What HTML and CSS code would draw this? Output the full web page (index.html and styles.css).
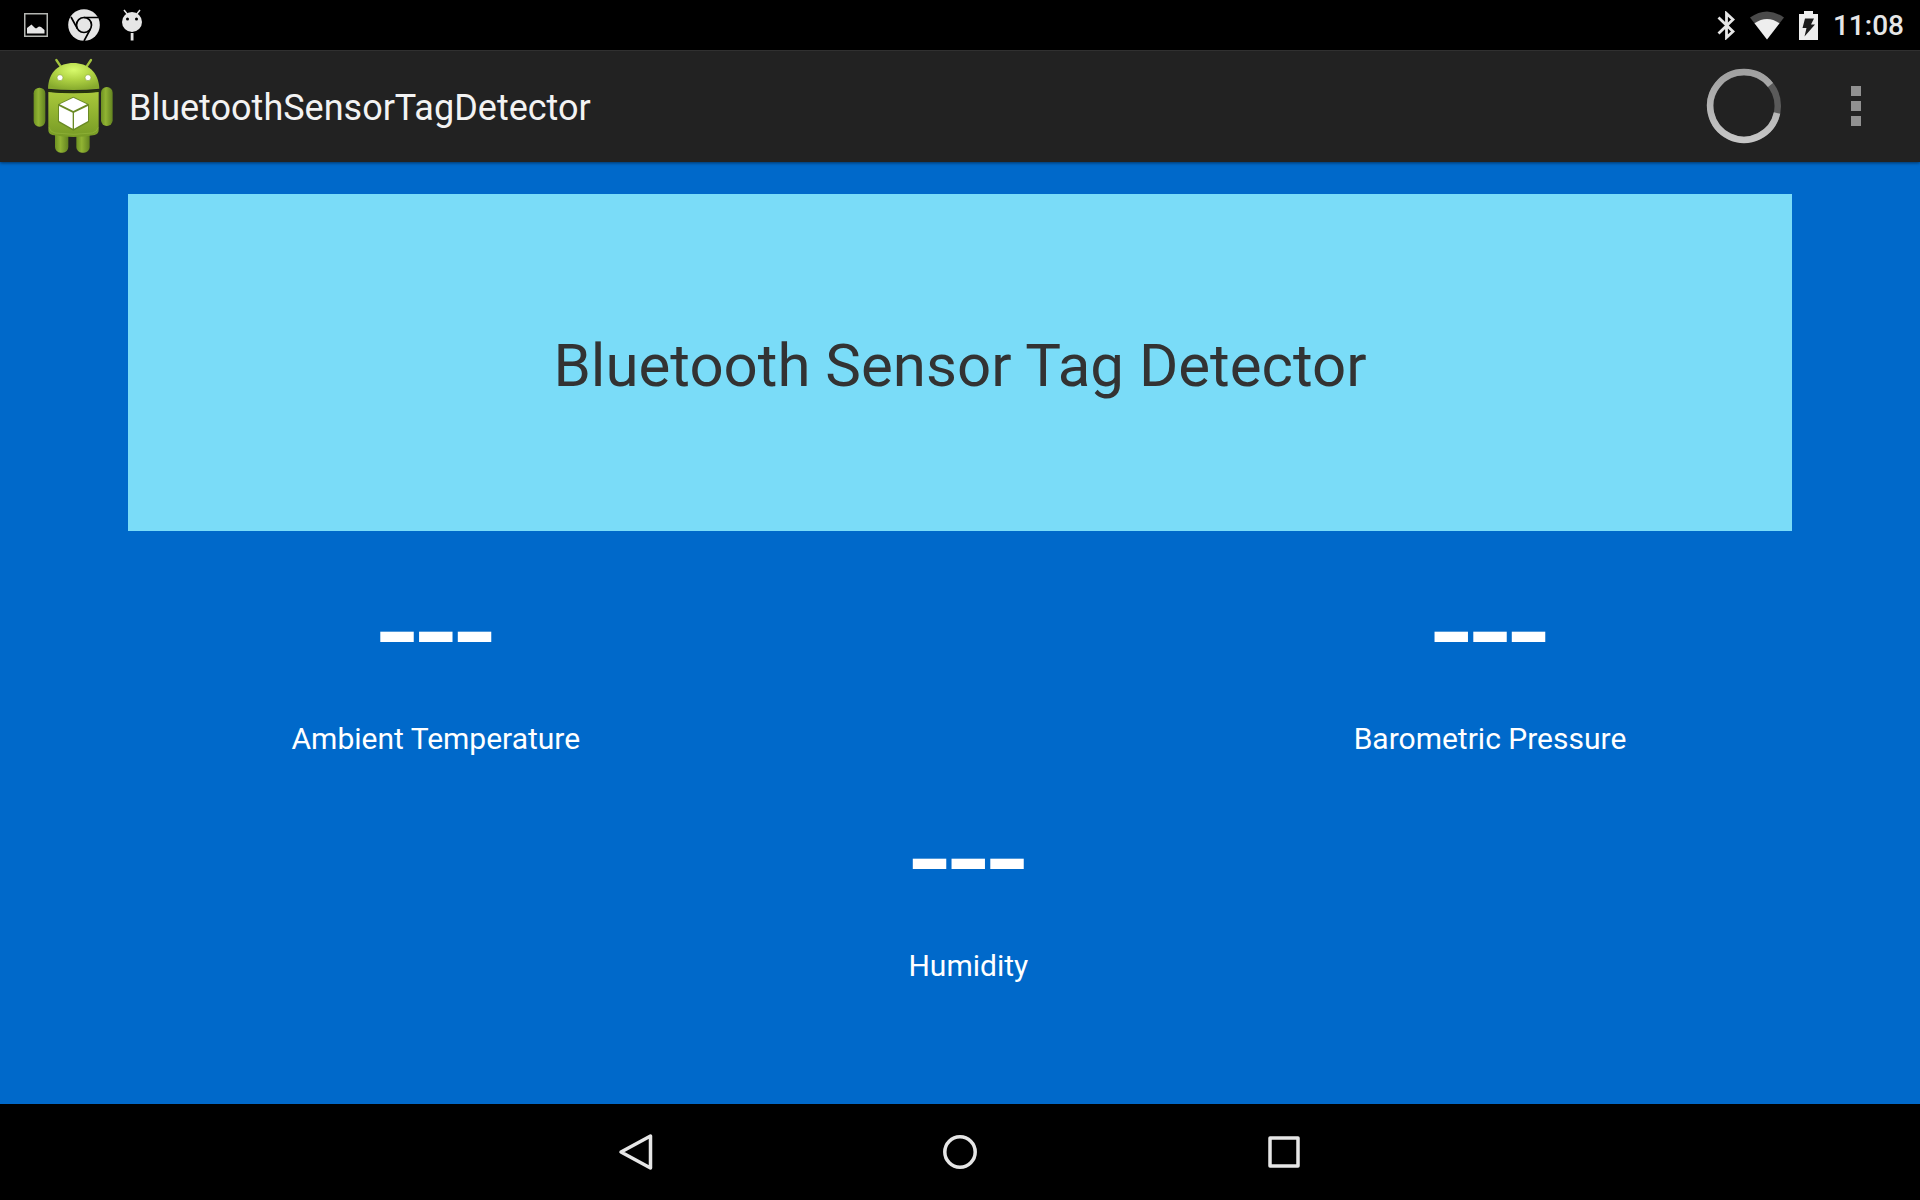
FILE: index.html
```html
<!DOCTYPE html>
<html lang="en">
<head>
    <meta charset="UTF-8">
    <meta name="viewport" content="width=device-width, initial-scale=1.0">
    <title>BluetoothSensorTagDetector</title>
    <link rel="stylesheet" href="styles.css">
</head>
<body>
    <div class="status-bar">
        <div class="status-icons notifications">
            <svg width="24" height="24" viewBox="0 0 24 24">
                <rect x="0.75" y="0.75" width="22.5" height="22.5" fill="none" stroke="#b4b6b2" stroke-width="1.5"/>
                <path d="M3 20.500V15l4.500-3.500 3 3 1.500 1 3-2 2 .5 3.500 3v3.500z" fill="#e6e6e6"/>
            </svg>
            <svg width="32" height="32" viewBox="0 0 32 32">
                <circle cx="16" cy="16" r="15.800" fill="#e6e6e6"/>
                <g fill="none" stroke="#000" stroke-width="1.700">
                    <circle cx="16" cy="16" r="7.500"/>
                    <path d="M16 8.500H30M9.500 19.800L3 8M22.500 19.800L16 32"/>
                </g>
            </svg>
            <svg width="24" height="32" viewBox="-2 0 24 32">
                <path d="M2 1l4 5M18 1l-4 5" stroke="#e6e6e6" stroke-width="1.500"/>
                <circle cx="10" cy="13" r="10" fill="#e6e6e6"/>
                <circle cx="5.500" cy="10" r="1.500"/>
                <circle cx="14.500" cy="10" r="1.500"/>
                <path d="M8.700 24h2.800v7.500H8.700z" fill="#e6e6e6"/>
            </svg>
        </div>
        <div class="status-icons">
            <svg width="18" height="29" viewBox="0 0 18 29">
                <path d="M1.500 6.500L16 20.500l-6.500 6V2.500l6.500 6L1.500 22.500" fill="none" stroke="#e6e6e6" stroke-width="2.800"/>
            </svg>
            <svg width="34" height="29" viewBox="0 0 34 29">
                <path d="M0 6.500Q17-5.500 34 6.500L17 28.500z" fill="#4a4a4a"/>
                <path d="M4.500 12.300Q17 3.500 29.500 12.300L17 28.500z" fill="#eee"/>
            </svg>
            <svg width="19" height="29" viewBox="0 0 19 29">
                <path d="M5 0h9v3h5v26H0V3h5z" fill="#eee"/>
                <path d="M6 7.500h9l-3 6h4L5.500 25.500l2-8.500H3.500z" fill="#1c1c1c"/>
            </svg>
            <time class="clock">11:08</time>
        </div>
    </div>

    <header class="action-bar">
        <svg class="app-icon" viewBox="12 15 288 336">
            <defs>
                <linearGradient id="green" x1="0" y1="0" x2="0" y2="1">
                    <stop offset="0" stop-color="#a9c83b"/>
                    <stop offset="1" stop-color="#779b25"/>
                </linearGradient>
                <linearGradient id="limb" x1="0" y1="0" x2="1" y2="0">
                    <stop offset="0" stop-color="#6e9122"/>
                    <stop offset="0.400" stop-color="#91b433"/>
                    <stop offset="1" stop-color="#628220"/>
                </linearGradient>
                <radialGradient id="head" cx="0.500" cy="0.250" r="0.750">
                    <stop offset="0" stop-color="#d8fb6c"/>
                    <stop offset="0.500" stop-color="#b0d344"/>
                    <stop offset="1" stop-color="#86a92d"/>
                </radialGradient>
            </defs>
            <path d="M109 45l15 22M213 45l-15 22" stroke="#a2c33d" stroke-width="7" stroke-linecap="round"/>
            <rect x="105" y="250" width="40" height="73" rx="17" fill="url(#limb)"/>
            <rect x="169" y="250" width="40" height="73" rx="17" fill="url(#limb)"/>
            <rect x="41" y="128" width="35" height="117" rx="17" fill="url(#limb)"/>
            <rect x="243" y="126" width="35" height="117" rx="17" fill="url(#limb)"/>
            <path d="M84 131C85 80 118 54 160 54s76 26 78 77q-77 8-154 0z" fill="url(#head)"/>
            <path d="M85 141q76 8 151 0v114q0 12-12 15-64 12-127 0-12-3-12-15z" fill="url(#green)"/>
            <path d="M84 134q76 8 153 0v6q-76 8-153 0z" fill="#26340b"/>
            <path d="M87 247q3 14 18 17 56 8 112 0 14-3 18-17" fill="none" stroke="#a5c548" stroke-width="2" opacity="0.600"/>
            <circle cx="120" cy="98" r="9" fill="#fff" stroke="#8cab3c" stroke-width="2"/>
            <circle cx="204" cy="98" r="9" fill="#fff" stroke="#8cab3c" stroke-width="2"/>
            <path d="M160 155l47 23v53l-47 26-46-26v-53z" fill="#6a8a26"/>
            <path d="M160 158l41 20-41 20-41-20zM117 183l41 20v48l-41-23zM204 183v45l-42 23v-48z" fill="#fff"/>
        </svg>
        <h1 class="app-title">BluetoothSensorTagDetector</h1>
        <svg class="spinner" role="progressbar" aria-label="Scanning" viewBox="0 0 96 96">
            <defs>
                <linearGradient id="ring" x1="0" y1="0" x2="0" y2="1">
                    <stop offset="0" stop-color="#a0a0a0"/>
                    <stop offset="1" stop-color="#c6c6c6"/>
                </linearGradient>
            </defs>
            <circle cx="48" cy="48" r="33.800" fill="none" stroke="#5a5a5a" stroke-width="6.500"/>
            <path d="M81 55A33.800 33.800 0 1 1 74.500 27" fill="none" stroke="url(#ring)" stroke-width="6.500"/>
        </svg>
        <button class="menu-button" type="button" aria-label="More options">
            <span class="dot"></span>
            <span class="dot"></span>
            <span class="dot"></span>
        </button>
    </header>

    <main class="content">
        <h2 class="banner">Bluetooth Sensor Tag Detector</h2>
        <div class="readings">
            <div class="reading temperature">
                <div class="value">---</div>
                <div class="label">Ambient Temperature</div>
            </div>
            <div class="reading pressure">
                <div class="value">---</div>
                <div class="label">Barometric Pressure</div>
            </div>
            <div class="reading humidity">
                <div class="value">---</div>
                <div class="label">Humidity</div>
            </div>
        </div>
    </main>

    <nav class="nav-bar">
        <button class="nav-button" type="button" aria-label="Back">
            <svg width="40" height="40" viewBox="0 0 40 40">
                <path d="M34.500 4v32L5 20z"/>
            </svg>
        </button>
        <button class="nav-button" type="button" aria-label="Home">
            <svg width="40" height="40" viewBox="0 0 40 40">
                <circle cx="20" cy="20" r="15.200"/>
            </svg>
        </button>
        <button class="nav-button" type="button" aria-label="Recent apps">
            <svg width="40" height="40" viewBox="0 0 40 40">
                <rect x="6" y="6" width="28" height="28"/>
            </svg>
        </button>
    </nav>
</body>
</html>
```
FILE: styles.css
```css
body {
    display: flex;
    flex-direction: column;
    min-height: 100vh;
    margin: 0;
    background-color: #0069ca;
    font-family: Roboto, sans-serif;
    color: #fff;
}
button {
    padding: 0;
    border: none;
    background: none;
    cursor: pointer;
}
.status-bar {
    display: flex;
    justify-content: space-between;
    align-items: center;
    height: 50px;
    padding: 0 16px 0 24px;
    background-color: #000;
}
.status-icons {
    display: flex;
    align-items: center;
    gap: 15px;
}
.notifications {
    gap: 20px;
}
.clock {
    padding-top: 2px;
    font-size: 28px;
    line-height: 32px;
    font-weight: 500;
    color: #e6e6e6;
}
.action-bar {
    display: flex;
    align-items: center;
    height: 112px;
    padding-left: 24px;
    background-color: #222;
    box-shadow: 0 1px 3px rgba(0, 0, 0, 0.5), inset 0 1px #303030;
}
.app-icon {
    width: 96px;
    height: 112px;
}
.app-title {
    flex: 1;
    margin: 0;
    padding: 4px 0 0 9px;
    font-size: 36px;
    line-height: 44px;
    font-weight: 400;
    color: #f3f3f3;
}
.spinner {
    width: 96px;
    height: 96px;
}
.menu-button {
    display: flex;
    flex-direction: column;
    justify-content: center;
    align-items: center;
    gap: 5px;
    width: 128px;
    height: 100%;
}
.dot {
    width: 10px;
    height: 10px;
    background-color: #919191;
}
.content {
    flex: 1;
    padding: 32px 128px;
}
.banner {
    margin: 0;
    padding: 140px 0 133px;
    background-color: #7adcf8;
    font-size: 60px;
    line-height: 64px;
    font-weight: 400;
    text-align: center;
    color: #333;
}
.readings {
    display: grid;
    grid-template-columns: 37% 1fr 36.3%;
    row-gap: 41px;
    margin-top: 40px;
    text-align: center;
}
.pressure {
    grid-column: 3;
}
.humidity {
    grid-column: 2;
    padding-left: 5px;
}
.value {
    margin-bottom: 30px;
    font-size: 140px;
    line-height: 120px;
}
.label {
    font-size: 30px;
    line-height: 36px;
}
.nav-bar {
    display: flex;
    justify-content: center;
    height: 96px;
    background-color: #000;
}
.nav-button {
    display: flex;
    justify-content: center;
    align-items: center;
    width: 324px;
}
.nav-button svg {
    fill: none;
    stroke: #e6e6e6;
    stroke-width: 3.5px;
    stroke-linejoin: round;
}
```
